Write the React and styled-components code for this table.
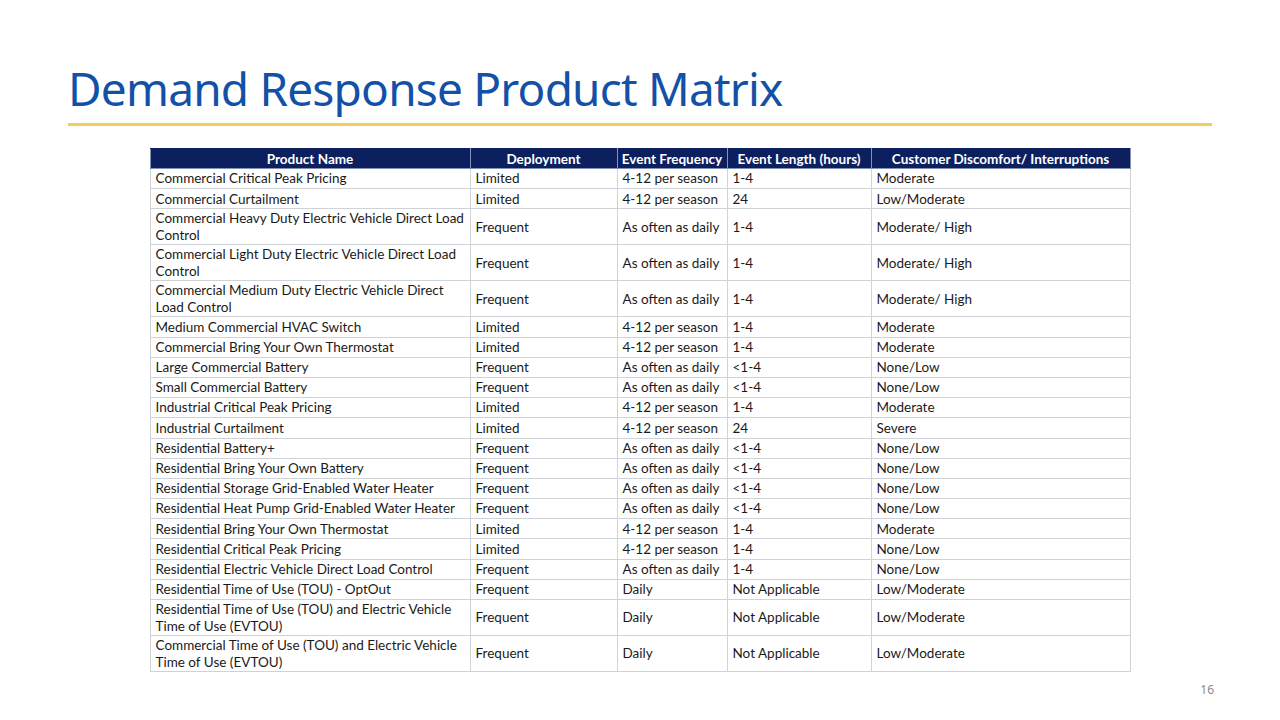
import React from 'react';
import styled, { createGlobalStyle } from 'styled-components';

const GlobalStyle = createGlobalStyle`
  html, body {
    margin: 0;
    padding: 0;
    background: #ffffff;
  }
`;

const columns = [
  { label: 'Product Name', width: 320 },
  { label: 'Deployment', width: 147 },
  { label: 'Event Frequency', width: 110 },
  { label: 'Event Length (hours)', width: 144 },
  { label: 'Customer Discomfort/ Interruptions', width: 259 },
];

const rows = [
  ['Commercial Critical Peak Pricing', 'Limited', '4-12 per season', '1-4', 'Moderate'],
  ['Commercial Curtailment', 'Limited', '4-12 per season', '24', 'Low/Moderate'],
  ['Commercial Heavy Duty Electric Vehicle Direct Load Control', 'Frequent', 'As often as daily', '1-4', 'Moderate/ High'],
  ['Commercial Light Duty Electric Vehicle Direct Load Control', 'Frequent', 'As often as daily', '1-4', 'Moderate/ High'],
  ['Commercial Medium Duty Electric Vehicle Direct Load Control', 'Frequent', 'As often as daily', '1-4', 'Moderate/ High'],
  ['Medium Commercial HVAC Switch', 'Limited', '4-12 per season', '1-4', 'Moderate'],
  ['Commercial Bring Your Own Thermostat', 'Limited', '4-12 per season', '1-4', 'Moderate'],
  ['Large Commercial Battery', 'Frequent', 'As often as daily', '<1-4', 'None/Low'],
  ['Small Commercial Battery', 'Frequent', 'As often as daily', '<1-4', 'None/Low'],
  ['Industrial Critical Peak Pricing', 'Limited', '4-12 per season', '1-4', 'Moderate'],
  ['Industrial Curtailment', 'Limited', '4-12 per season', '24', 'Severe'],
  ['Residential Battery+', 'Frequent', 'As often as daily', '<1-4', 'None/Low'],
  ['Residential Bring Your Own Battery', 'Frequent', 'As often as daily', '<1-4', 'None/Low'],
  ['Residential Storage Grid-Enabled Water Heater', 'Frequent', 'As often as daily', '<1-4', 'None/Low'],
  ['Residential Heat Pump Grid-Enabled Water Heater', 'Frequent', 'As often as daily', '<1-4', 'None/Low'],
  ['Residential Bring Your Own Thermostat', 'Limited', '4-12 per season', '1-4', 'Moderate'],
  ['Residential Critical Peak Pricing', 'Limited', '4-12 per season', '1-4', 'None/Low'],
  ['Residential Electric Vehicle Direct Load Control', 'Frequent', 'As often as daily', '1-4', 'None/Low'],
  ['Residential Time of Use (TOU) - OptOut', 'Frequent', 'Daily', 'Not Applicable', 'Low/Moderate'],
  ['Residential Time of Use (TOU) and Electric Vehicle Time of Use (EVTOU)', 'Frequent', 'Daily', 'Not Applicable', 'Low/Moderate'],
  ['Commercial Time of Use (TOU) and Electric Vehicle Time of Use (EVTOU)', 'Frequent', 'Daily', 'Not Applicable', 'Low/Moderate'],
];

export default function App() {
  return (
    <Slide>
      <GlobalStyle />
      <TitleBlock>
        <Title>Demand Response Product Matrix</Title>
        <Rule />
      </TitleBlock>
      <Matrix>
        <colgroup>
          {columns.map((c) => <col key={c.label} style={{ width: c.width }} />)}
        </colgroup>
        <thead>
          <tr>
            {columns.map((c) => <HeadCell key={c.label}>{c.label}</HeadCell>)}
          </tr>
        </thead>
        <tbody>
          {rows.map((r) => (
            <tr key={r[0]}>
              {r.map((v, i) => <Cell key={i}>{v}</Cell>)}
            </tr>
          ))}
        </tbody>
      </Matrix>
      <PageNumber>16</PageNumber>
    </Slide>
  );
}

const Slide = styled.div`
  position: relative;
  width: 1280px;
  height: 720px;
  overflow: hidden;
  background: #ffffff;
  display: flex;
  flex-direction: column;
  align-items: center;
  font-family: Lato, 'Liberation Sans', sans-serif;
`;

const TitleBlock = styled.div`
  align-self: stretch;
  padding: 58px 68px 0 68px;
  display: flex;
  flex-direction: column;
`;

const Title = styled.h1`
  margin: 0;
  font-family: 'Noto Sans', 'Open Sans', sans-serif;
  font-weight: 400;
  font-size: 46px;
  line-height: 60px;
  letter-spacing: -0.8px;
  color: #1350a8;
`;

const Rule = styled.div`
  margin-top: 5px;
  height: 3px;
  background: #f4cd57;
`;

const Matrix = styled.table`
  margin-top: 22px;
  width: 980px;
  border-collapse: collapse;
  table-layout: fixed;
  font-size: 13.5px;
  color: #1a1a1a;
`;

const HeadCell = styled.th`
  height: 19px;
  padding: 0 4px;
  background: #0c1f5e;
  color: #ffffff;
  font-weight: 700;
  font-size: 13.5px;
  line-height: 16px;
  text-align: center;
  white-space: nowrap;
  border: 1px solid #8392b5;
  border-top-color: #0c1f5e;
`;

const Cell = styled.td`
  height: 17.2px;
  padding: 1px 5px;
  line-height: 16.5px;
  vertical-align: middle;
  border: 1px solid #cfd3d8;
`;

const PageNumber = styled.div`
  position: absolute;
  right: 66px;
  bottom: 22px;
  font-family: 'Noto Sans', sans-serif;
  font-size: 12px;
  color: #8a8a8a;
`;
